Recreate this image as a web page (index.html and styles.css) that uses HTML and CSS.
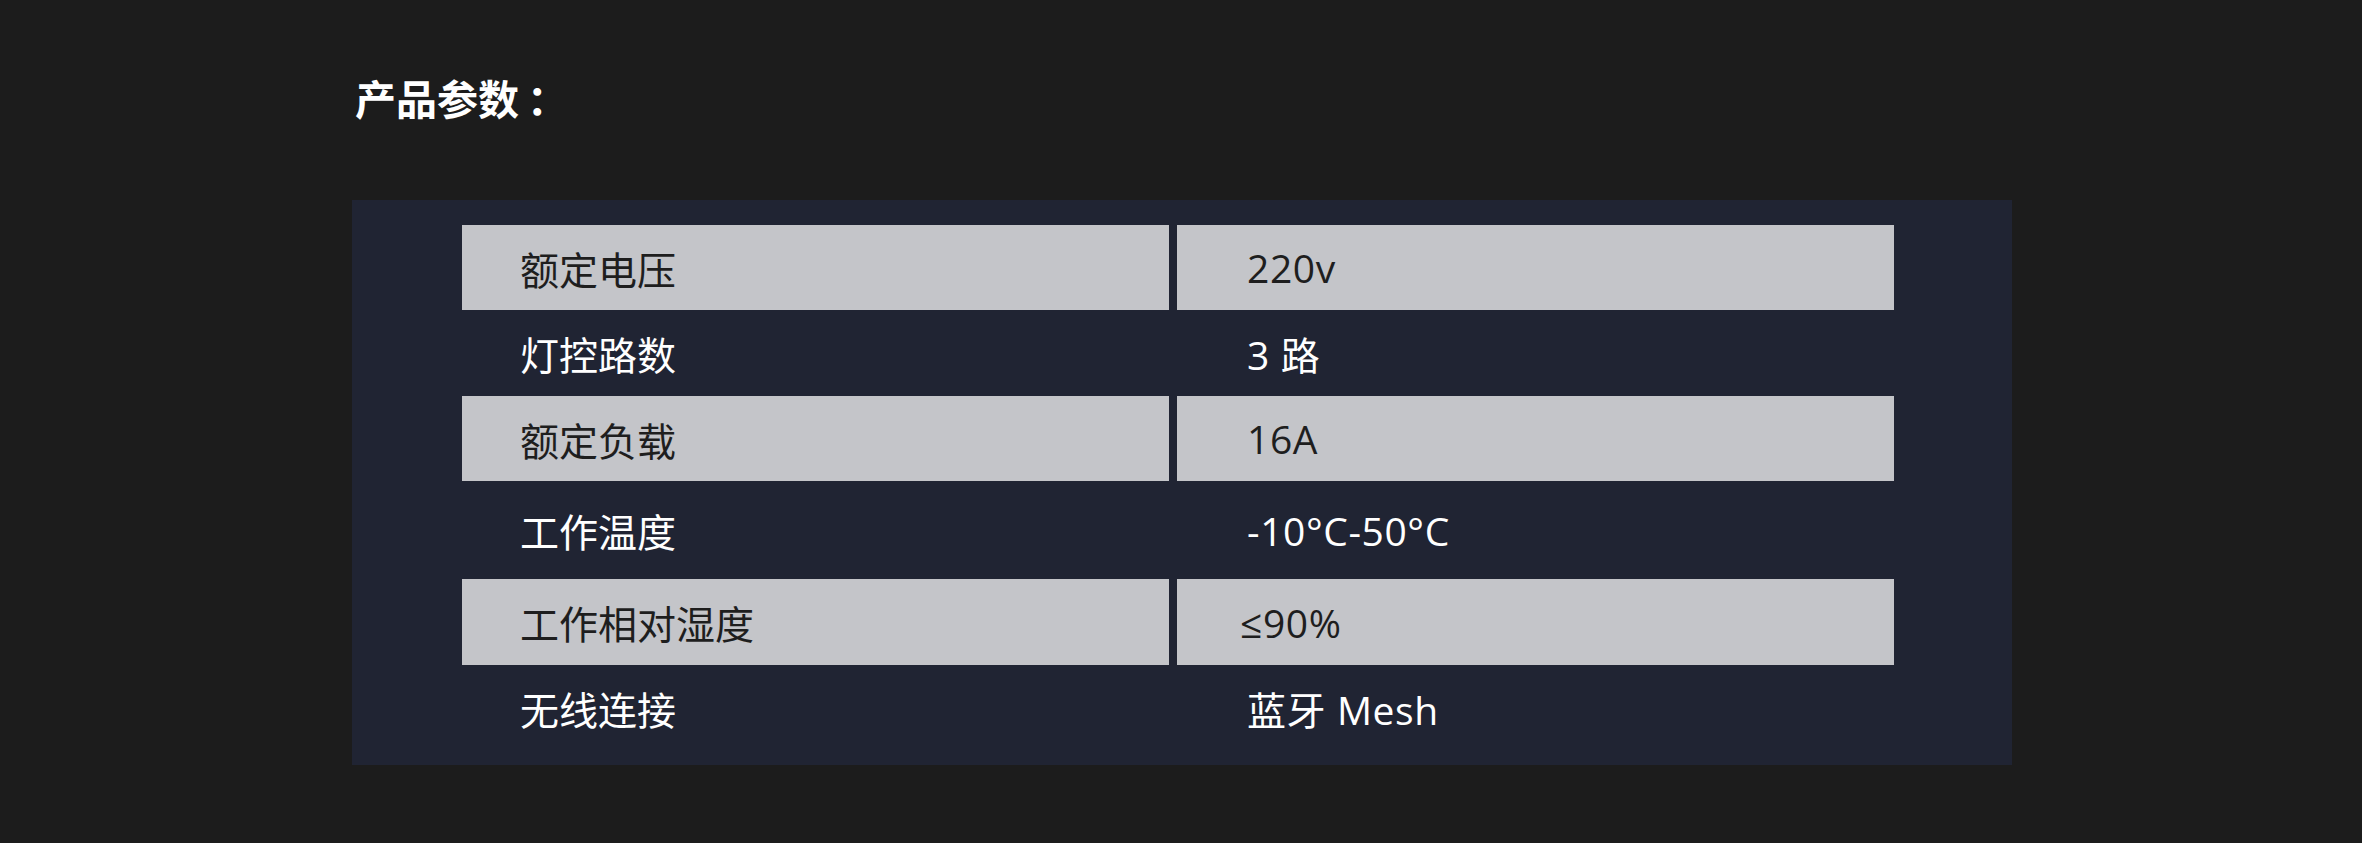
FILE: index.html
```html
<!DOCTYPE html>
<html lang="zh-CN">
<head>
<meta charset="utf-8">
<title>产品参数</title>
<link rel="stylesheet" href="styles.css">
</head>
<body>
<div class="wrap">
  <h1 class="title">产品参数<span class="colon">：</span></h1>
  <div class="panel">
    <div class="grid">
      <div class="cell label lit">额定电压</div>
      <div class="cell value lit">220v</div>
      <div class="cell label">灯控路数</div>
      <div class="cell value">3 路</div>
      <div class="cell label lit">额定负载</div>
      <div class="cell value lit">16A</div>
      <div class="cell label">工作温度</div>
      <div class="cell value">-10°C-50°C</div>
      <div class="cell label lit">工作相对湿度</div>
      <div class="cell value lit le">≤90%</div>
      <div class="cell label">无线连接</div>
      <div class="cell value">蓝牙 Mesh</div>
    </div>
  </div>
</div>
</body>
</html>
```
FILE: styles.css
```css
html, body {
  margin: 0;
  padding: 0;
  background: #1c1c1c;
}
body {
  font-family: "Open Sans", "Noto Sans CJK SC", sans-serif;
  color: #ffffff;
}
.wrap {
  width: 1660px;
  margin: 0 0 0 352px;
  padding-top: 67px;
}
.title {
  margin: 0 0 73px 3px;
  font-family: "Noto Sans CJK SC", sans-serif;
  font-weight: 700;
  font-size: 41px;
  line-height: 60px;
  color: #ffffff;
}
.colon {
  margin-left: 8px;
}
.panel {
  background: #202433;
  padding: 25px 118px 14px 110px;
}
.grid {
  display: grid;
  grid-template-columns: 707px 717px;
  grid-template-rows: 85px 86px 85px 98px 86px 86px;
  column-gap: 8px;
}
.cell {
  display: flex;
  align-items: center;
  font-size: 39px;
  color: #ffffff;
  white-space: nowrap;
}
.label {
  padding-left: 58px;
}
.value {
  padding-left: 70px;
  letter-spacing: 0.6px;
}
.value.le {
  padding-left: 63px;
}
.lit {
  background: #c4c5c9;
  color: #1e1e1e;
}
```
